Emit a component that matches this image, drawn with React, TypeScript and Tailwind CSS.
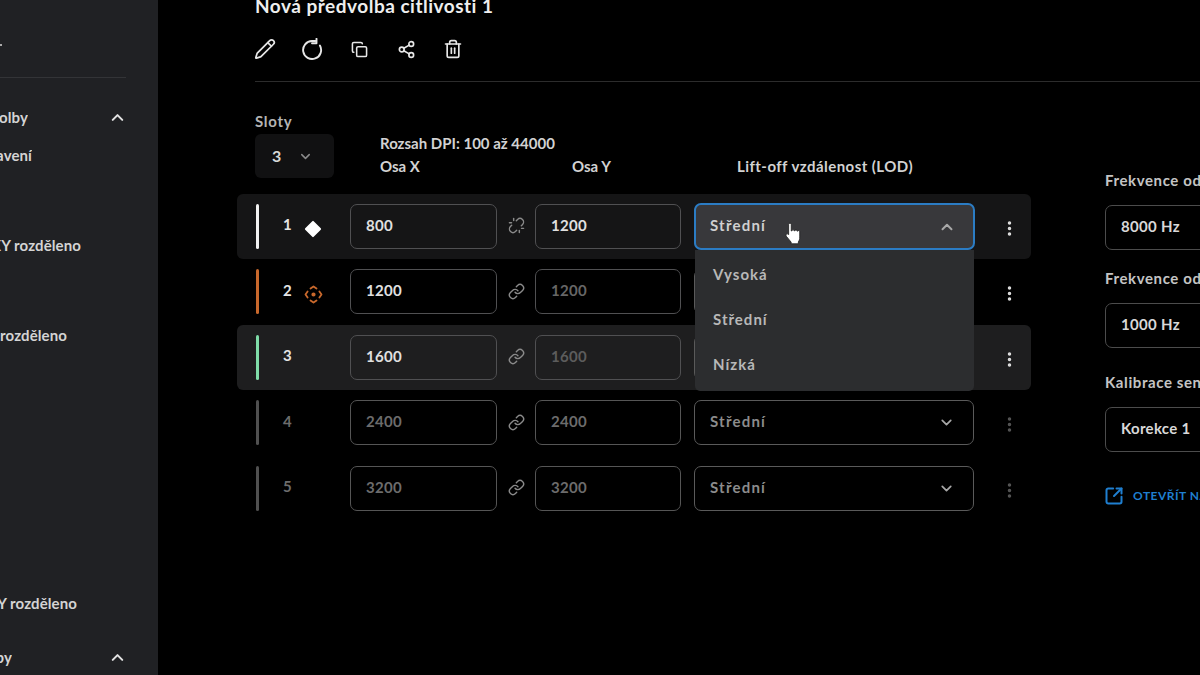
import { ChevronDown, ChevronUp, Copy, EllipsisVertical, Link, Pencil, Share2, SquareArrowOutUpRight, Trash2, Unlink } from "lucide-react";

const font = "font-['Lato','Noto_Sans',sans-serif]";

const rows = [
  { n: 1, x: "800", y: "1200", bar: "bg-[#f2f2f2]", bg: "bg-[#151516]", mark: "diamond", unlinked: true },
  { n: 2, x: "1200", y: "1200", bar: "bg-[#c8682c]", bg: "bg-black", mark: "move", dimY: true },
  { n: 3, x: "1600", y: "1600", bar: "bg-[#7fdca8]", bg: "bg-[#1e1e1f]", dimY: true, dimYDark: true },
  { n: 4, x: "2400", y: "2400", bar: "bg-[#505050]", bg: "bg-black", off: true },
  { n: 5, x: "3200", y: "3200", bar: "bg-[#505050]", bg: "bg-black", off: true },
];

const Diamond = () => (
  <svg width="20" height="20" viewBox="0 0 20 20">
    <rect x="4" y="4" width="12" height="12" rx="1" fill="#ffffff" transform="rotate(45 10 10)" />
  </svg>
);

const MoveMark = () => (
  <svg width="19" height="19" viewBox="0 0 19 19" fill="none" stroke="#c8682c" strokeWidth="1.8" strokeLinecap="round" strokeLinejoin="round">
    <path d="M6.5 3.6 9.5 1.5l3 2.1" />
    <path d="M6.5 15.4l3 2.1 3-2.1" />
    <path d="M3.6 6.5 1.5 9.5l2.1 3" />
    <path d="M15.4 6.5l2.1 3-2.1 3" />
    <circle cx="9.5" cy="9.500" r="1.2" fill="#c8682c" />
  </svg>
);

const ResetIcon = () => (
  <svg width="22" height="22" viewBox="0 0 22 22" fill="none" stroke="currentColor" strokeWidth="1.9" strokeLinecap="round" strokeLinejoin="round" className="shrink-0">
    <path d="M18.900 7.500A9 9 0 1 1 11 3h3.500" />
    <path d="M15.500 .8v4.400H11" />
  </svg>
);

const HandCursor = () => (
  <svg width="18" height="24" viewBox="0 0 16 22">
    <path
      d="M4 2.200c0-1.500 2.400-1.500 2.400 0v6l.6-.1c0-1.300 2.200-1.300 2.200 0l.5.1c0-1.200 2.100-1.200 2.100.1l.4.2c.2-1 2-.9 2 .4v4.800c0 2.300-.5 3.300-1.300 4.600v1.700H6.300v-1.500L1.800 13c-1-1.500.6-2.900 1.900-1.700l.3.300z"
      fill="#ffffff"
      stroke="#222222"
      strokeWidth="0.8"
    />
  </svg>
);

const SideRow = ({ text, width, className, chevron }: { text: string; width: number; className: string; chevron?: boolean }) => (
  <div className={`flex h-[20px] items-center ${className}`}>
    <div className="flex justify-end overflow-hidden" style={{ width }}>
      <span className="whitespace-nowrap text-[15px] font-bold tracking-[0.1px] text-[#d4d4d4]">{text}</span>
    </div>
    {chevron && <ChevronUp size={19} strokeWidth={2.6} className="ml-auto mr-[31px] text-[#e2e2e2]" />}
  </div>
);

const Sidebar = () => (
  <aside className="flex h-full w-[158px] shrink-0 flex-col overflow-hidden bg-[#202124]">
    <div className="mt-[44px] h-[2px] w-[2px] bg-[#aaaaaa]" />
    <div className="mt-[31px] h-px w-[126px] bg-[#333437]" />
    <SideRow text="Předvolby" width={28} chevron className="mt-[29px]" />
    <SideRow text="Nastavení" width={32} className="mt-[18px]" />
    <SideRow text="XY rozděleno" width={81} className="mt-[70px]" />
    <SideRow text="XY rozděleno" width={67} className="mt-[70px]" />
    <SideRow text="XY rozděleno" width={77} className="mt-[248px]" />
    <SideRow text="Předvolby" width={12} chevron className="mt-[34px]" />
  </aside>
);

const Field = ({ value, width, text, border }: { value: string; width: string; text: string; border: string }) => (
  <div className={`flex h-[45px] shrink-0 items-center rounded-[7px] border pb-[3px] pl-[15px] text-[15px] font-bold tracking-[0.3px] ${width} ${text} ${border}`}>
    {value}
  </div>
);

const Row = ({ row }: { row: (typeof rows)[number] }) => {
  const off = row.off;
  const border = off ? "border-[#555555]" : "border-[#505052]";
  const yText = off ? "text-[#6c6c6c]" : row.dimYDark ? "text-[#5c5c5c]" : row.dimY ? "text-[#666666]" : "text-[#e0e0e0]";
  return (
    <div className={`flex h-[65.5px] w-[794px] items-center rounded-[6px] pl-[19px] ${row.bg}`}>
      <div className={`h-[45px] w-[3px] shrink-0 rounded-full ${row.bar}`} />
      <div className="flex w-[91px] shrink-0 items-center">
        <span className={`ml-[24px] w-[21px] pb-[4px] text-[15px] font-bold ${off ? "text-[#6c6c6c]" : "text-[#e4e4e4]"}`}>{row.n}</span>
        <div className="ml-[-1px] flex w-[20px] translate-y-[3px] justify-center">
          {row.mark === "diamond" && <Diamond />}
          {row.mark === "move" && <MoveMark />}
        </div>
      </div>
      <Field value={row.x} width="w-[147px]" text={off ? "text-[#6c6c6c]" : "text-[#e0e0e0]"} border={border} />
      <div className="flex w-[38px] shrink-0 justify-center pb-[1px] text-[#8a8a8a]">
        {row.unlinked ? <Unlink size={17} strokeWidth={2} /> : <Link size={17} strokeWidth={2} />}
      </div>
      <Field value={row.y} width="w-[146px]" text={yText} border={border} />
      <div className="ml-[13px] flex h-[45px] w-[280px] shrink-0 items-center justify-between rounded-[7px] border border-[#5a5a5a] pl-[15px] pr-[18px]">
        <span className="pb-[3px] text-[15px] font-bold tracking-[1.2px] text-[#8c8c8c]">Střední</span>
        <ChevronDown size={17} strokeWidth={2.4} className="text-[#a8a8a8]" />
      </div>
      <div className="flex w-[70px] shrink-0 translate-y-[2px] justify-center">
        <EllipsisVertical size={19} strokeWidth={2.4} className={off ? "text-[#555555]" : "text-[#e0e0e0]"} />
      </div>
    </div>
  );
};

const Dropdown = () => (
  <div className="absolute left-[536px] top-[203px] w-[281px]">
    <div className="flex h-[47px] items-center justify-between rounded-[7px] border-2 border-[#2b7cc4] bg-[#38383b] pl-[14px] pr-[17px]">
      <span className="pb-[3px] text-[15px] font-bold tracking-[1.2px] text-[#d0d0d0]">Střední</span>
      <ChevronUp size={18} strokeWidth={2.6} className="text-[#a8a8a8]" />
    </div>
    <div className="ml-px flex h-[141px] w-[279px] flex-col rounded-b-[5px] bg-[#2c2d2f] pl-[18px] pt-[13px] text-[15px] font-bold tracking-[1px] text-[#b8b8b8]">
      <span className="flex h-[22px] items-center">Vysoká</span>
      <span className="mt-[23px] flex h-[22px] items-center">Střední</span>
      <span className="mt-[23px] flex h-[22px] items-center">Nízká</span>
    </div>
  </div>
);

const RightField = ({ label, value, className }: { label: string; value: string; className: string }) => (
  <div className={className}>
    <div className="flex h-[18px] items-center whitespace-nowrap text-[15px] font-bold tracking-[0.6px] text-[#c4c4c4]">{label}</div>
    <div className="mt-[15px] flex h-[45px] w-[200px] items-center rounded-[7px] border border-[#4c4c4c] pb-[2px] pl-[15px] text-[15px] font-bold tracking-[0.3px] text-[#d8d8d8]">
      {value}
    </div>
  </div>
);

const App = () => {
  return (
    <div className={`flex h-[675px] w-[1200px] overflow-hidden bg-black ${font}`}>
      <Sidebar />
      <main className="relative h-full flex-1 overflow-hidden pl-[97px]">
        <h1 className="mt-[-6px] h-[24px] whitespace-nowrap text-[19px] font-bold leading-[24px] tracking-[0.5px] text-[#eeeeee]">
          Nová předvolba citlivosti 1
        </h1>
        <div className="mt-[20px] flex h-[22px] items-center gap-[27px] text-[#e6e6e6]">
          <div className="flex w-[20px] justify-center"><Pencil size={22} strokeWidth={1.9} className="shrink-0" /></div>
          <div className="flex w-[20px] justify-center"><ResetIcon /></div>
          <div className="flex w-[20px] justify-center"><Copy size={17} strokeWidth={2.2} className="shrink-0" /></div>
          <div className="flex w-[20px] justify-center"><Share2 size={19} strokeWidth={2.1} className="shrink-0" /></div>
          <div className="flex w-[20px] justify-center"><Trash2 size={20} strokeWidth={2} className="shrink-0" /></div>
        </div>
        <div className="mt-[21px] h-px w-full bg-[#2c2c2c]" />

        <div className="mt-[30px] flex h-[67px] items-start">
          <div className="w-[125px]">
            <div className="flex h-[18px] items-center text-[15px] font-bold tracking-[0.7px] text-[#b4b4b4]">Sloty</div>
            <div className="mt-[4px] flex h-[44px] w-[79px] items-center rounded-[6px] bg-[#111112] pl-[17px] text-[#d8d8d8]">
              <span className="text-[16px] font-bold">3</span>
              <ChevronDown size={15} strokeWidth={2.4} className="ml-[17px] text-[#8a8a8a]" />
            </div>
          </div>
          <div className="mt-[22px] text-[15px] font-bold text-[#d2d2d2]">
            <div className="flex h-[18px] items-center">Rozsah DPI: 100 až 44000</div>
            <div className="mt-[5px] flex h-[18px] items-center">
              <span className="w-[192px]">Osa X</span>
              <span className="w-[165px]">Osa Y</span>
              <span className="whitespace-nowrap tracking-[0.45px]">Lift-off vzdálenost (LOD)</span>
            </div>
          </div>
        </div>

        <div className="ml-[-18px] mt-[14.6px] flex">
          <div className="shrink-0">
            {rows.map((row) => (
              <Row key={row.n} row={row} />
            ))}
          </div>
          <div className="ml-[74px] mt-[-22px] shrink-0">
            <RightField label="Frekvence odezvy" value="8000 Hz" className="" />
            <RightField label="Frekvence odezvy" value="1000 Hz" className="mt-[20px]" />
            <RightField label="Kalibrace senzoru" value="Korekce 1" className="mt-[26px]" />
            <div className="mt-[34px] flex items-center whitespace-nowrap text-[12px] font-bold tracking-[0.5px] text-[#1f7fd0]">
              <SquareArrowOutUpRight size={20} strokeWidth={2.4} className="-ml-[1px]" />
              <span className="ml-[9px]">OTEVŘÍT NASTAVENÍ</span>
            </div>
          </div>
        </div>

        <Dropdown />
        <div className="absolute left-[626px] top-[222px]">
          <HandCursor />
        </div>
      </main>
    </div>
  );
};

export default App;
